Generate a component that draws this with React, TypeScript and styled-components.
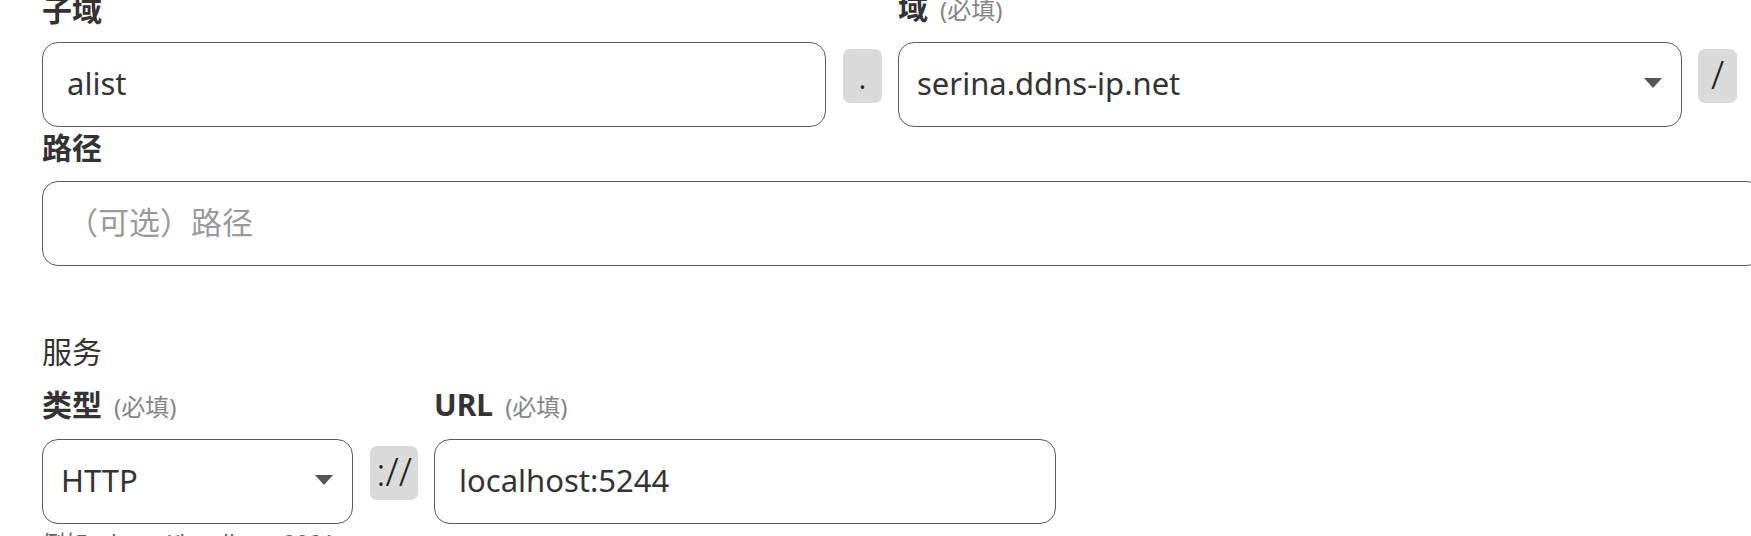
import React from 'react';
import styled, { createGlobalStyle } from 'styled-components';

const GlobalStyle = createGlobalStyle`
  html, body {
    margin: 0;
    background: #ffffff;
    overflow: hidden;
  }
  body {
    font-family: 'Noto Sans', 'Noto Sans CJK SC', sans-serif;
    color: #333333;
  }
`;

const Page = styled.div`
  margin-top: -12px;
  padding: 0 1px 0 42px;
`;

const Row = styled.div<{ $inset?: number }>`
  display: flex;
  align-items: flex-end;
  margin-right: ${(p) => p.$inset ?? 0}px;
`;

const Field = styled.div<{ $width?: number }>`
  display: flex;
  flex-direction: column;
  flex: ${(p) => (p.$width ? `0 0 ${p.$width}px` : '1 1 0')};
  min-width: 0;
`;

const Label = styled.label<{ $gap?: number }>`
  display: flex;
  align-items: baseline;
  font-size: 30px;
  line-height: 40px;
  font-weight: 700;
  color: #333333;
  margin-bottom: ${(p) => p.$gap ?? 12}px;
`;

const Required = styled.span`
  font-size: 24px;
  font-weight: 400;
  color: #858585;
  margin-left: 12px;
`;

const TextInput = styled.input`
  box-sizing: border-box;
  width: 100%;
  height: 85px;
  border: 1px solid #5c5c5c;
  border-radius: 16px;
  padding: 0 24px 3px;
  font-family: 'Noto Sans', 'Noto Sans CJK SC', sans-serif;
  font-size: 31px;
  color: #333333;
  background: #ffffff;
  outline: none;

  &::placeholder {
    color: #9a9a9a;
  }
`;

const SelectBox = styled.div`
  box-sizing: border-box;
  height: 85px;
  border: 1px solid #5c5c5c;
  border-radius: 16px;
  padding: 0 19px 3px 18px;
  display: flex;
  align-items: center;
  justify-content: space-between;
  font-size: 31px;
  color: #333333;
`;

const Affix = styled.div<{ $width: number; $left: number; $right: number }>`
  flex: 0 0 ${(p) => p.$width}px;
  height: 54px;
  margin: 0 ${(p) => p.$right}px 24px ${(p) => p.$left}px;
  background: #dadada;
  border-radius: 7px;
  display: flex;
  align-items: center;
  justify-content: center;
  font-size: 38px;
  font-weight: 300;
  color: #222222;
  padding-bottom: 4px;
  box-sizing: border-box;
`;

const PathField = styled(Field)`
  margin: 1px -13px 0 0;
`;

const SectionTitle = styled.div`
  font-size: 30px;
  line-height: 40px;
  color: #333333;
  margin: 66px 0 13px;
`;

const Hint = styled.div`
  margin-top: 4px;
  font-size: 23px;
  line-height: 30px;
  color: #666666;
`;

const Caret = () => (
  <svg width="18" height="10" viewBox="0 0 18 10">
    <path d="M0 0 L18 0 L9 10 Z" fill="#555555" />
  </svg>
);

export default function App() {
  return (
    <>
      <GlobalStyle />
      <Page>
        <Row $inset={13}>
          <Field>
            <Label>子域</Label>
            <TextInput readOnly value="alist" />
          </Field>
          <Affix $width={39} $left={17} $right={16}>.</Affix>
          <Field>
            <Label>
              域<Required>(必填)</Required>
            </Label>
            <SelectBox>
              <span>serina.ddns-ip.net</span>
              <Caret />
            </SelectBox>
          </Field>
          <Affix $width={39} $left={16} $right={0}>/</Affix>
        </Row>

        <Row>
          <PathField>
            <Label $gap={13}>路径</Label>
            <TextInput readOnly placeholder="（可选）路径" />
          </PathField>
        </Row>

        <SectionTitle>服务</SectionTitle>

        <Row>
          <Field $width={311}>
            <Label>
              类型<Required>(必填)</Required>
            </Label>
            <SelectBox>
              <span>HTTP</span>
              <Caret />
            </SelectBox>
          </Field>
          <Affix $width={48} $left={17} $right={16}>://</Affix>
          <Field $width={622}>
            <Label>
              URL<Required>(必填)</Required>
            </Label>
            <TextInput readOnly value="localhost:5244" />
          </Field>
        </Row>
        <Hint>例如：http://localhost:8081</Hint>
      </Page>
    </>
  );
}
